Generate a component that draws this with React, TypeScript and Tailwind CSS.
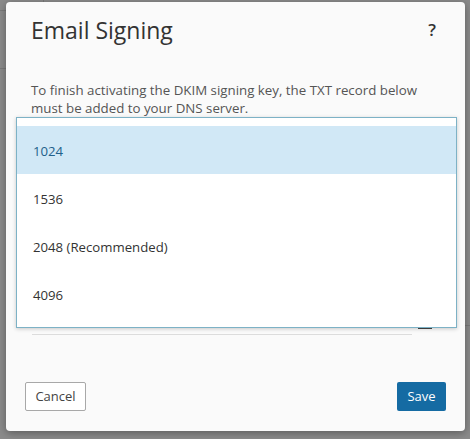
import React from 'react';

const options = ['1024', '1536', '2048 (Recommended)', '4096'];

const App = () => {
  return (
    <div className="relative w-[470px] h-[439px] overflow-hidden bg-[#8b8b8b] font-['Open_Sans',sans-serif]">
      {/* page behind the overlay */}
      <div className="absolute left-[43px] top-0 w-px h-[12px] bg-[#7a7a7a]"></div>
      <div className="absolute left-0 top-[10px] w-[8px] h-px bg-[#7a7a7a]"></div>
      <div className="absolute right-0 top-[325px] w-[6px] h-px bg-[#7a7a7a]"></div>
      <div className="absolute left-0 top-[68px] w-[6px] h-px bg-[#7a7a7a]"></div>

      <div className="pl-[6px] pt-[2px]">
        {/* Dialog */}
        <div className="relative w-[459px] h-[429px] bg-[#fafafa] rounded-[4px] shadow-[0_2px_8px_rgba(0,0,0,0.35)] flex flex-col">
          <div className="flex items-center justify-between pl-[25px] pr-[29px] pt-[13px]">
            <h1 className="text-[23px] leading-[30px] text-[#333]">Email Signing</h1>
            <span className="text-[17px] font-semibold text-[#333]">?</span>
          </div>

          <p className="mt-[36px] pl-[25px] w-[425px] text-[13.3px] leading-[18px] text-[#555]">
            To finish activating the DKIM signing key, the TXT record below must be added to your DNS server.
          </p>

          <div className="flex-1"></div>

          <div className="flex items-center justify-between px-[19px] pb-[20px]">
            <button className="h-[29px] w-[61px] border border-[#a8a8a8] rounded-[2px] bg-white text-[13px] text-[#444]">
              Cancel
            </button>
            <button className="h-[29px] w-[49px] rounded-[2px] bg-[#156ba3] text-[13px] text-white">
              Save
            </button>
          </div>

          {/* field underneath the open list */}
          <div className="absolute left-[26px] top-[332px] w-[380px] h-px bg-[#dcdcdc]"></div>
          <div className="absolute left-[412px] top-[324px] w-[14px] h-[3px] bg-[#444]"></div>

          {/* Open dropdown list */}
          <div className="absolute left-[10px] top-[115px] w-[441px] h-[211px] bg-white border border-[#7db2c6] shadow-[0_1px_4px_rgba(0,0,0,0.2)] pt-[8px]">
            {options.map((opt, i) => (
              <div
                key={opt}
                className={
                  i === 0
                    ? 'h-[48px] flex items-center pl-[16px] pt-[3px] bg-[#d1e8f6] text-[13.2px] text-[#22608a]'
                    : 'h-[48px] flex items-center pl-[16px] pt-[3px] text-[13.2px] text-[#333]'
                }
              >
                {opt}
              </div>
            ))}
          </div>
        </div>
      </div>
    </div>
  );
};

export default App;
